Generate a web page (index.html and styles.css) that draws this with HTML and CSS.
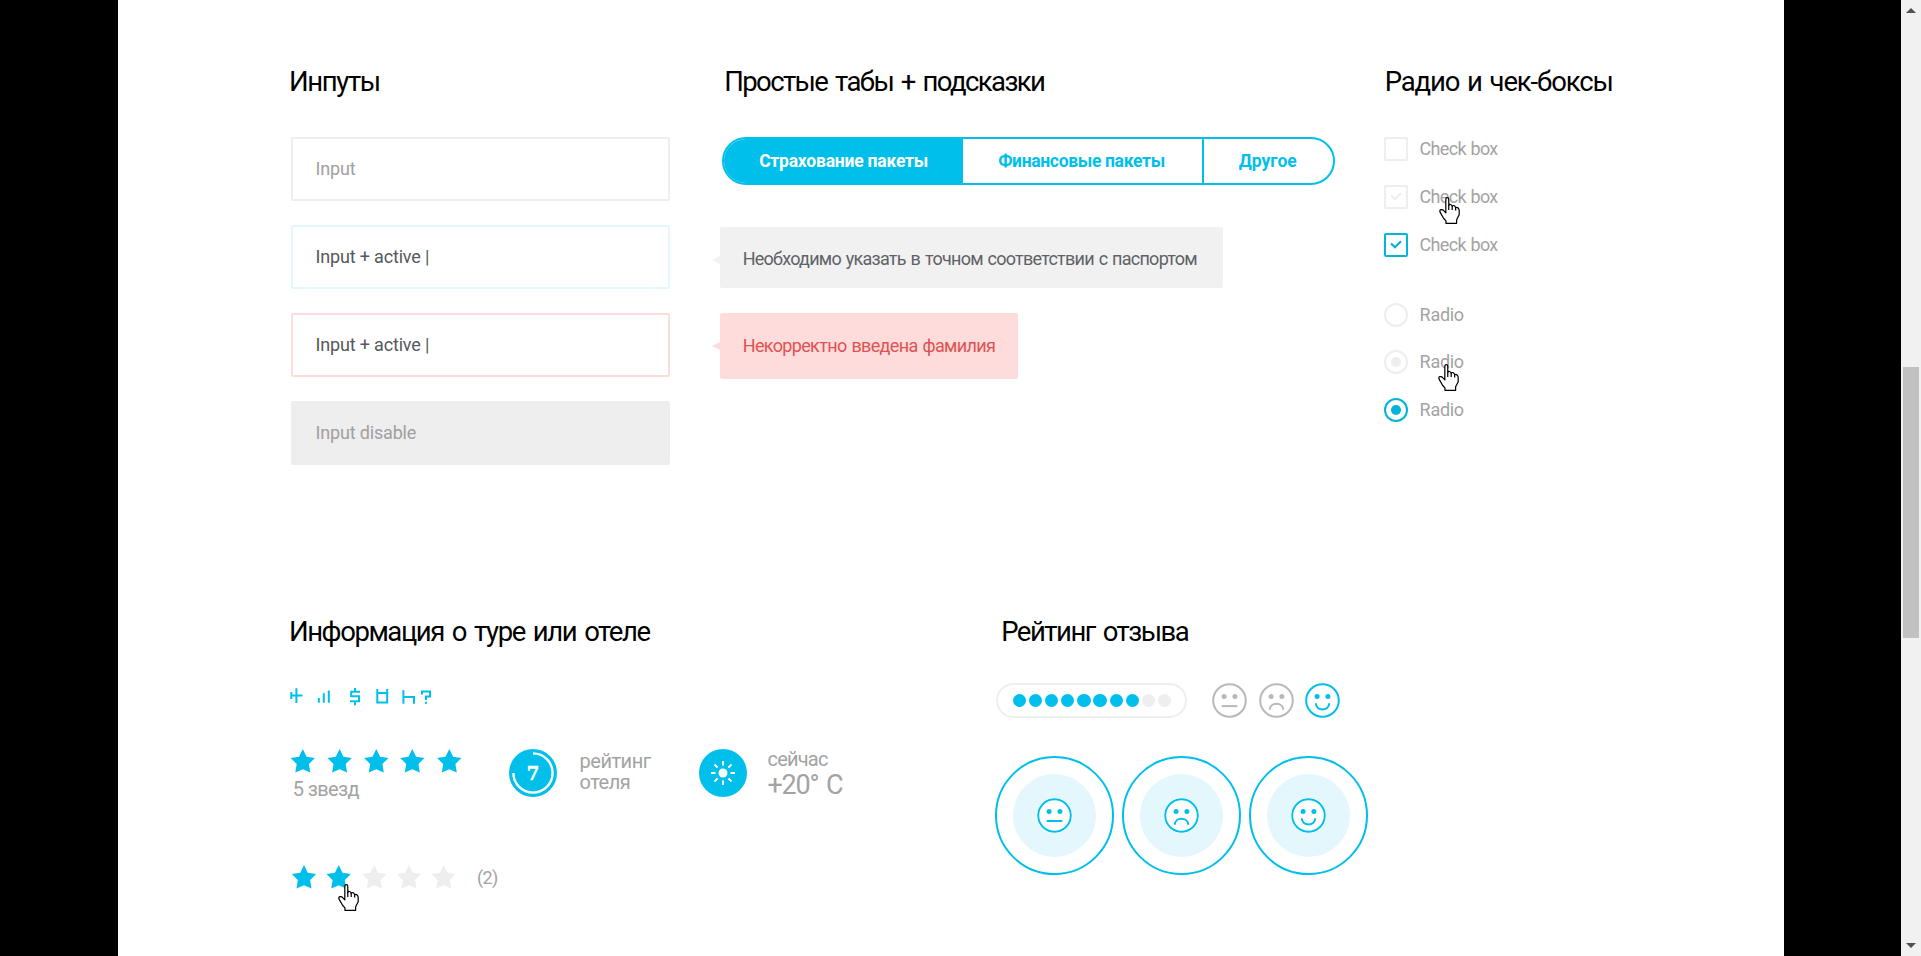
FILE: index.html
```
<!DOCTYPE html>
<html lang="ru">
<head>
<meta charset="utf-8">
<title>UI Kit</title>
<link rel="stylesheet" href="styles.css">
</head>
<body>
<svg class="defs" width="0" height="0">
  <symbol id="hand" viewBox="0 0 17 22">
    <path d="M5.5 13V2Q5.500.6 6.700.6T7.900 2V6.800Q8.200 5.900 9.300 6.100T10.700 7.600Q11.200 6.700 12.200 7T13.500 8.800Q14.500 8 15.500 8.900T16.400 11V14.500L14.300 18.500V21.400H5.600V19.500L3.800 17.500L.8 12.300Q.200 10.500 1.600 10.300T4 11.300Z" fill="#fff" stroke="#000" stroke-linejoin="round"/>
    <path d="M7.900 6.500V10.500M10.700 7.500V10.500M13.500 8.800V11" stroke="#000" fill="none"/>
  </symbol>
  <symbol id="star" viewBox="0 0 25 24">
    <path d="M12.500 0L16.300 7.700L24.700 8.900L18.600 14.900L20 23.500L12.500 20.300L5 23.500L6.400 14.900L.3 8.900L8.700 7.700Z"/>
  </symbol>
  <symbol id="face-neutral" viewBox="-17.500 -17.500 35 35">
    <circle r="16.300" class="face-line"/><circle cx="-5.400" cy="-4" r="2.500" fill="currentColor"/><circle cx="5.400" cy="-4" r="2.500" fill="currentColor"/><path class="face-line" d="M-7.800 5.600H7.800"/>
  </symbol>
  <symbol id="face-sad" viewBox="-17.500 -17.500 35 35">
    <circle r="16.300" class="face-line"/><circle cx="-5.400" cy="-4" r="2.500" fill="currentColor"/><circle cx="5.400" cy="-4" r="2.500" fill="currentColor"/><path class="face-line" d="M-6.700 9.300C-6.700 1.200 6.700 1.200 6.700 9.300"/>
  </symbol>
  <symbol id="face-happy" viewBox="-17.500 -17.500 35 35">
    <circle r="16.300" class="face-line"/><circle cx="-5.400" cy="-4" r="2.500" fill="currentColor"/><circle cx="5.400" cy="-4" r="2.500" fill="currentColor"/><path class="face-line" d="M-6.700 2.800C-6.700 10.900 6.700 10.900 6.700 2.800"/>
  </symbol>
</svg>

<main class="page">
  <section class="row row-forms">
    <div>
      <h2 class="title title-inputs">Инпуты</h2>
      <div class="inputs">
        <div class="input">Input</div>
        <div class="input input-active">Input + active |</div>
        <div class="input input-error">Input + active |</div>
        <div class="input input-disabled">Input disable</div>
      </div>
    </div>
    <div>
      <h2 class="title title-tabs">Простые табы + подсказки</h2>
      <nav class="tabs">
        <span class="tab tab-current">Страхование пакеты</span>
        <span class="tab tab-finance">Финансовые пакеты</span>
        <span class="tab tab-other">Другое</span>
      </nav>
      <div class="tip">Необходимо указать в точном соответствии с паспортом</div>
      <div class="tip tip-error">Некорректно введена фамилия</div>
    </div>
    <div>
      <h2 class="title title-checks">Радио и чек-боксы</h2>
      <div class="options">
        <div class="option"><i class="box"></i><span class="check-text">Check box</span></div>
        <div class="option"><i class="box"><svg viewBox="0 0 12 9" width="12" height="9"><path d="M1 3.500L5 7.200L11 1.300"/></svg></i><span class="check-text">Check box</span><svg class="hand hand-check"><use href="#hand"/></svg></div>
        <div class="option on"><i class="box"><svg viewBox="0 0 12 9" width="12" height="9"><path d="M1 3.500L5 7.200L11 1.300"/></svg></i><span class="check-text">Check box</span></div>
      </div>
      <div class="options options-radio">
        <div class="option"><i class="box round"></i><span class="radio-text">Radio</span></div>
        <div class="option"><i class="box round"><b class="dot"></b></i><span class="radio-text">Radio</span><svg class="hand hand-radio"><use href="#hand"/></svg></div>
        <div class="option on"><i class="box round"><b class="dot"></b></i><span class="radio-text">Radio</span></div>
      </div>
    </div>
  </section>

  <section class="row row-info">
    <div>
      <h2 class="title title-hotel">Информация о туре или отеле</h2>
      <svg class="glyphs" viewBox="290 688 142 18" width="142" height="18">
        <path d="M291.300 692V699M291 695.400H302.500M296.400 688.300V703M318.800 698V702.700M323.800 693.300V702.700M328.800 690.500V702.700M355 688V692M355 701V705.300M360 691.700H351.200V696.200H359V701.200H350M377.300 689V702.500H387.200V689M377.300 692.900H387.200M403.400 690.300V703.700M403.400 697H414V703.700M422 694.500V691.600H430V696.600H426V700M426 701.700V703.700"/>
      </svg>
      <div class="facts">
        <div class="stars-block">
          <svg class="stars" width="173" height="24"><use href="#star" x="0.300" width="25" height="24"/><use href="#star" x="37.100" width="25" height="24"/><use href="#star" x="73.800" width="25" height="24"/><use href="#star" x="109.800" width="25" height="24"/><use href="#star" x="146.800" width="25" height="24"/></svg>
          <p class="stars-text">5 звезд</p>
        </div>
        <svg class="badge" viewBox="-24 -24 48 48" width="48" height="48"><circle r="24" fill="#00bfea"/><path d="M0-19.600A19.600 19.600 0 1 1-19.600 0" fill="none" stroke="#fff" stroke-width="2.400"/><text class="badge-num" x="0" y="7" text-anchor="middle">7</text></svg>
        <p class="rating-text">рейтинг<br><span>отеля</span></p>
        <svg class="badge badge-sun" viewBox="-24 -24 48 48" width="48" height="48"><circle r="24" fill="#00bfea"/><circle r="4.500" fill="#fff"/><path d="M0-12V-7.500M0 7.500V12M-12 0H-7.500M7.500 0H12M-8.500-8.500L-5.400-5.400M8.500-8.500L5.400-5.400M-8.500 8.500L-5.400 5.400M8.500 8.500L5.400 5.400" stroke="#fff" stroke-width="2"/></svg>
        <p class="weather"><span>сейчас</span><strong>+20° C</strong></p>
      </div>
      <div class="vote">
        <svg class="stars" width="172" height="24"><use href="#star" x="1.500" width="25" height="24"/><use href="#star" x="36.200" width="25" height="24"/><g fill="#eee"><use href="#star" x="71.800" width="25" height="24"/><use href="#star" x="106.500" width="25" height="24"/><use href="#star" x="141.200" width="25" height="24"/></g></svg>
        <span class="votes">(2)</span>
        <svg class="hand hand-vote"><use href="#hand"/></svg>
      </div>
    </div>
    <div>
      <h2 class="title title-review">Рейтинг отзыва</h2>
      <div class="scores">
        <div class="pill"><i></i><i></i><i></i><i></i><i></i><i></i><i></i><i></i><i class="off"></i><i class="off"></i></div>
        <svg class="face gray"><use href="#face-neutral"/></svg>
        <svg class="face gray"><use href="#face-sad"/></svg>
        <svg class="face"><use href="#face-happy"/></svg>
      </div>
      <div class="targets">
        <div class="target"><div class="disc"><svg class="face"><use href="#face-neutral"/></svg></div></div>
        <div class="target"><div class="disc"><svg class="face"><use href="#face-sad"/></svg></div></div>
        <div class="target"><div class="disc"><svg class="face"><use href="#face-happy"/></svg></div></div>
      </div>
    </div>
  </section>
</main>
<aside class="scrollbar">
  <svg viewBox="0 0 10 5" width="10" height="5"><path d="M5 0L10 5H0Z"/></svg>
  <div class="thumb"></div>
  <svg viewBox="0 0 10 5" width="10" height="5"><path d="M0 0H10L5 5Z"/></svg>
</aside>
</body>
</html>
```
FILE: styles.css
```
* { box-sizing: border-box; }
body {
  margin: 0;
  height: 956px;
  overflow: hidden;
  display: grid;
  grid-template-columns: 1666px 20px;
  justify-content: space-between;
  padding-left: 118px;
  background: #000;
  font: 18px/24px Roboto, "Noto Sans", sans-serif;
  color: #a3a3a3;
}
.defs { position: absolute; }
p, h2 { margin: 0; font-weight: 400; }
svg { display: block; flex: none; }

.page { background: #fff; padding: 62px 0 0 173px; overflow: hidden; }
.row { display: grid; }
.row-forms { grid-template-columns: 429px 664px 1fr; height: 550px; }
.row-info { grid-template-columns: 705px 1fr; }

.title { font-size: 27.500px; line-height: 40px; height: 75.400px; color: #000; white-space: nowrap; }
.title-inputs { letter-spacing: -1.350px; margin-left: -2px; }
.title-tabs { letter-spacing: -1.600px; word-spacing: 2.500px; margin-left: 4.200px; }
.title-checks { letter-spacing: -1.120px; word-spacing: 2px; margin-left: .7px; }
.title-hotel { letter-spacing: -1.430px; word-spacing: 2.600px; margin-left: -2px; }
.title-review { letter-spacing: -1.500px; word-spacing: 2.500px; margin-left: 5.200px; }

.inputs { display: grid; gap: 24px; width: 379px; }
.input {
  height: 64px;
  display: flex;
  align-items: center;
  padding: 0 22.500px 1px;
  border: 2px solid #eee;
  border-radius: 2px;
  color: #a0a0a0;
  letter-spacing: -.17px;
}
.input-active { border-color: #e3f8fe; color: #55585c; }
.input-error { border-color: #ffdcdc; color: #55585c; }
.input-disabled { background: #eee; }

.tabs {
  display: flex;
  width: 613px;
  height: 47.500px;
  margin-left: 2.300px;
  border: 2px solid #00bfea;
  border-radius: 24px;
  overflow: hidden;
  font-weight: 700;
  font-size: 17.500px;
  color: #00bfea;
}
.tab { display: flex; align-items: center; justify-content: center; }
.tab-current { width: 238.600px; background: #00bfea; color: #fff; letter-spacing: -.21px; }
.tab-finance { width: 241.200px; border-right: 2px solid #00bfea; padding-right: 2px; letter-spacing: -.33px; }
.tab-other { flex: 1; padding-right: 2px; }

.tip {
  position: relative;
  width: 503.300px;
  height: 61.500px;
  margin-top: 41.900px;
  padding: 2px 0 0 22.700px;
  display: flex;
  align-items: center;
  background: #f1f1f1;
  border-radius: 2px;
  color: #5f6266;
  letter-spacing: -.75px;
  word-spacing: 1.100px;
}
.tip::before {
  content: "";
  position: absolute;
  left: -8px;
  top: 50%;
  margin-top: -2px;
  border: solid transparent;
  border-width: 4px 8px 4px 0;
  border-right-color: #f1f1f1;
}
.tip-error { width: 297.500px; height: 65.500px; margin-top: 25px; padding-top: 0; background: #ffdcdc; color: #e05252; letter-spacing: -.65px; }
.tip-error::before { border-right-color: #ffdcdc; margin-top: -4px; }

.options { display: grid; gap: 23.600px; }
.options-radio { margin-top: 46.200px; }
.option { position: relative; display: flex; align-items: center; gap: 11.600px; height: 24px; }
.box { width: 24px; height: 24px; border: 2px solid #eee; border-radius: 2px; display: grid; place-items: center; }
.box path { fill: none; stroke: #eee; stroke-width: 2.200; }
.round { border-radius: 50%; }
.dot { width: 10px; height: 10px; border-radius: 50%; background: #eee; }
.on .box { border-color: #00b4dc; }
.on path { stroke: #00b4dc; }
.on .dot { background: #00b4dc; }
.check-text { letter-spacing: -.7px; word-spacing: 1px; }
.radio-text { letter-spacing: -.3px; }

.hand { position: absolute; width: 21px; height: 27px; }
.hand-check { left: 54.500px; top: 12.500px; }
.hand-radio { left: 53.500px; top: 13.700px; }
.hand-vote { left: 48px; top: 19px; }

.glyphs { margin: .9px 0 0 -.7px; fill: none; stroke: #00bfea; stroke-width: 2; }
.facts { display: flex; margin: 42.500px 0 0 -1px; height: 48px; }
.stars { fill: #00bfea; }
.stars-block { width: 219px; }
.stars-text { font-size: 20px; letter-spacing: -.62px; padding: 4.500px 0 0 2.700px; }
.badge-num { font: 700 18px "DejaVu Serif", serif; fill: #fff; stroke: #fff; stroke-width: .5px; }
.rating-text { width: 118.500px; padding: 2px 0 0 22.500px; font-size: 20px; line-height: 21.700px; letter-spacing: -.48px; white-space: nowrap; flex: none; margin-right: 23px; }
.weather { margin-left: 21px; display: flex; flex-direction: column; font-size: 20px; line-height: 20px; letter-spacing: -.8px; }
.weather strong { font-weight: 400; font-size: 27px; line-height: 32.600px; letter-spacing: -1.200px; word-spacing: 2px; }

.vote { position: relative; display: flex; margin: 68.300px 0 0 -1px; }
.votes { margin-left: 15px; font-size: 18px; line-height: 26px; letter-spacing: -.6px; }

.scores { display: flex; align-items: center; margin-top: -4.500px; }
.pill { width: 191px; height: 35px; border: 2px solid #eee; border-radius: 18px; display: flex; align-items: center; gap: 2.850px; padding-left: 14.700px; margin-right: 25.200px; }
.pill i { width: 13.300px; height: 13.300px; border-radius: 50%; background: #00bfea; }
.pill .off { background: #eee; }
.face { width: 35px; height: 35px; color: #00bfea; }
.face-line { fill: none; stroke: currentColor; stroke-width: 2; }
.gray { color: #b8b8b8; margin-right: 11.400px; }
.targets { display: flex; gap: 7.800px; margin: 38px 0 0 -.8px; }
.target { width: 119px; height: 119px; border: 2px solid #00bfea; border-radius: 50%; display: grid; place-items: center; }
.disc { width: 83px; height: 83px; border-radius: 50%; background: #e4f7fd; display: grid; place-items: center; }
.disc .face { background: #fff; border-radius: 50%; }

.scrollbar { background: #f1f1f1; display: flex; flex-direction: column; align-items: center; padding: 8px 0; fill: #505050; }
.thumb { width: 16px; height: 271px; margin: 354px 0 auto; background: #c1c1c1; }
```
